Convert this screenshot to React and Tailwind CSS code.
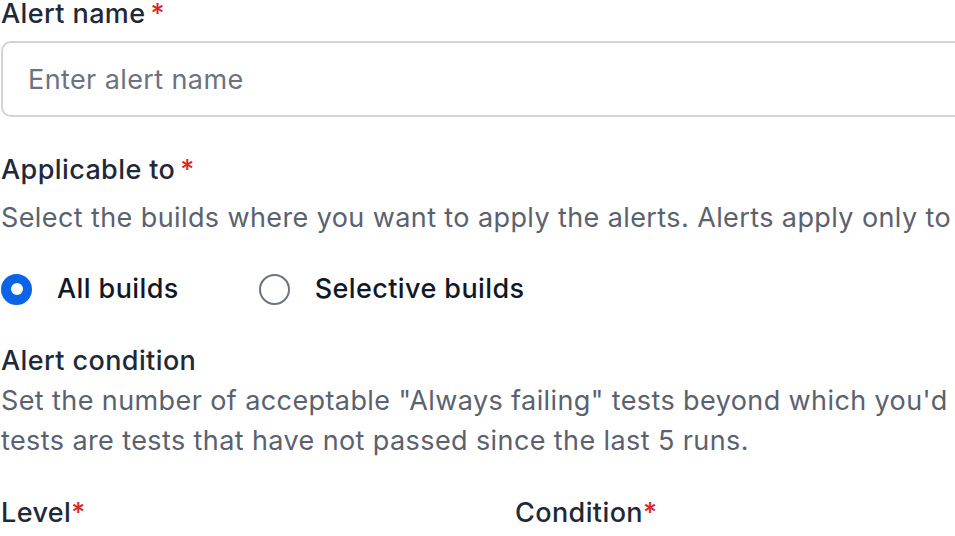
import { useState } from "react";

function Label({ text, gap = true }) {
    return (
        <div className="flex items-center h-[40px] text-[27px] tracking-[0.4px] font-medium text-[#1f2937]">
            <span>{text}</span>
            <span className={`text-[#dc2626] ${gap ? "ml-[5px]" : ""}`}>*</span>
        </div>
    );
}

function Radio({ checked, label, onClick }) {
    return (
        <div className="flex items-center gap-[25px] cursor-pointer" onClick={onClick}>
            {checked ? (
                <div className="w-[31px] h-[31px] rounded-full bg-[#0b63e5] flex items-center justify-center">
                    <div className="w-[12px] h-[12px] rounded-full bg-white"></div>
                </div>
            ) : (
                <div className="w-[31px] h-[31px] rounded-full border-2 border-[#6b7280] bg-white"></div>
            )}
            <span className="text-[27px] tracking-[0.4px] font-medium text-[#111827]">{label}</span>
        </div>
    );
}

export default function App() {
    const [name, setname] = useState("");
    const [applicable, setapplicable] = useState("all");
    return (
        <div className="w-full h-screen overflow-hidden bg-white" style={{ fontFamily: "Inter, 'Noto Sans', sans-serif" }}>
            <div className="w-[1040px] pl-[1px] -mt-[6px] leading-[40px]">
                <Label text="Alert name" />
                <input
                    type="text"
                    value={name}
                    onChange={(e) => setname(e.target.value)}
                    placeholder="Enter alert name"
                    className="mt-[7px] w-full h-[76px] border-2 border-[#d1d3d8] rounded-[10px] px-[25px] text-[27px] tracking-[0.4px] text-[#111827] placeholder:text-[#6b7280] outline-none"
                />
                <div className="mt-[33px]">
                    <Label text="Applicable to" />
                </div>
                <div className="mt-[8px] text-[27px] tracking-[0.4px] text-[#5b616e] whitespace-nowrap">
                    Select the builds where you want to apply the alerts. Alerts apply only to builds that match the selection.
                </div>
                <div className="mt-[31px] h-[40px] flex items-center gap-[80px]">
                    <Radio checked={applicable === "all"} label="All builds" onClick={() => setapplicable("all")} />
                    <Radio checked={applicable === "selective"} label="Selective builds" onClick={() => setapplicable("selective")} />
                </div>
                <div className="mt-[32px] text-[27px] tracking-[0.4px] font-medium text-[#1f2937]">Alert condition</div>
                <div className="text-[27px] tracking-[0.4px] text-[#5b616e] whitespace-nowrap">
                    <div>Set the number of acceptable "Always failing" tests beyond which you'd like to get alerted. Always failing</div>
                    <div>tests are tests that have not passed since the last 5 runs.</div>
                </div>
                <div className="mt-[32px] flex">
                    <div className="w-[514px]">
                        <Label text="Level" gap={false} />
                    </div>
                    <div className="flex-1">
                        <Label text="Condition" gap={false} />
                    </div>
                </div>
            </div>
        </div>
    );
}
